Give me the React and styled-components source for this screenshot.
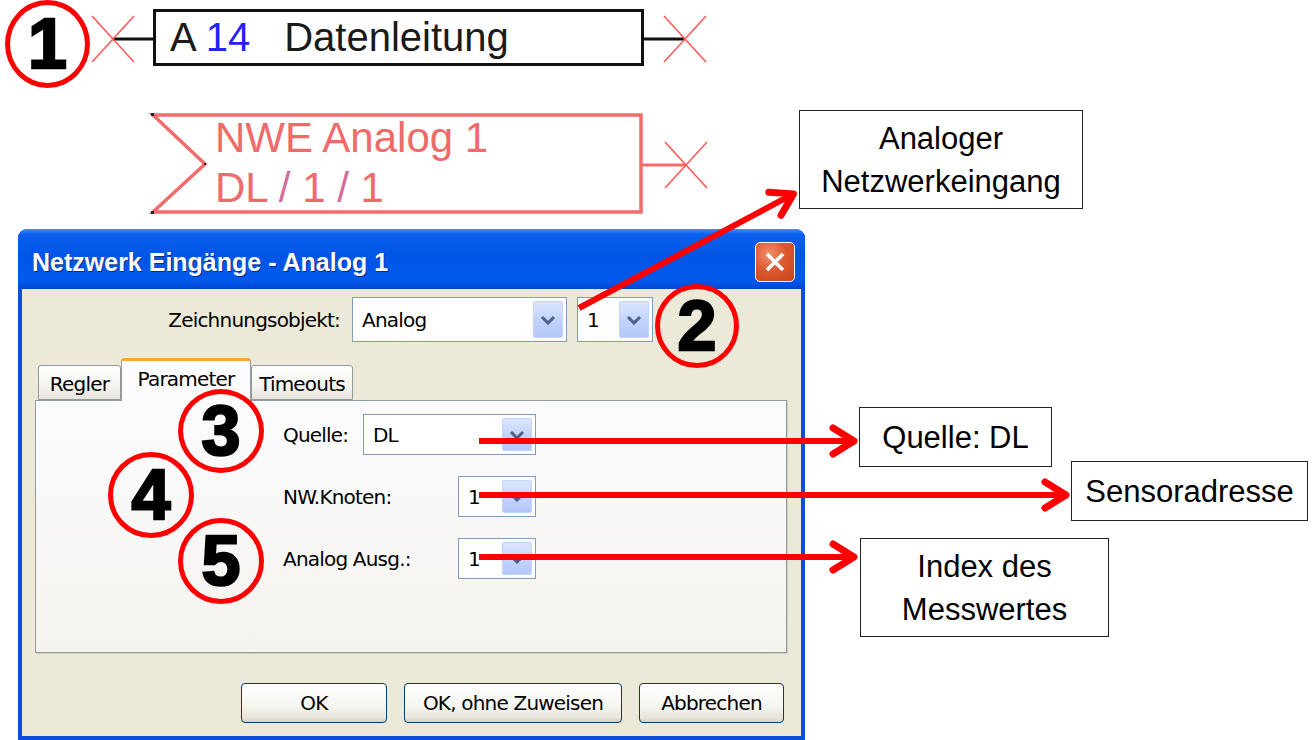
import React from 'react';
import styled, { createGlobalStyle } from 'styled-components';

const GlobalStyle = createGlobalStyle`
    html, body {
        margin: 0;
        padding: 0;
        background: #fff;
    }
    body {
        font-family: "Liberation Sans", Arial, sans-serif;
    }
`;

const Canvas = styled.div`
    position: relative;
    width: 1314px;
    height: 740px;
    overflow: hidden;
    background: #fff;
`;

const Overlay = styled.svg`
    position: absolute;
    left: 0;
    top: 0;
    width: 1314px;
    height: 740px;
    pointer-events: none;
    z-index: 3;
`;

/* line symbol "A 14 Datenleitung" */
const LineBox = styled.div`
    position: absolute;
    left: 153px;
    top: 9px;
    width: 491px;
    height: 57px;
    box-sizing: border-box;
    border: 3px solid #111;
    display: flex;
    align-items: center;
    padding-left: 14px;
    font-size: 40px;
    color: #1a1a1a;
    white-space: nowrap;
`;

const LineNumber = styled.span`
    color: #2323f0;
    margin-left: 9px;
`;

const LineName = styled.span`
    margin-left: 34px;
`;

/* network input symbol */
const InputText = styled.div`
    position: absolute;
    left: 215px;
    top: 113px;
    font-size: 42px;
    line-height: 50px;
    color: #f06a6a;
    white-space: nowrap;
`;

const Slash = styled.span`
    color: #d56c9e;
`;

const Callout = styled.div`
    position: absolute;
    left: ${p => p.$x}px;
    top: ${p => p.$y}px;
    width: ${p => p.$w}px;
    height: ${p => p.$h}px;
    box-sizing: border-box;
    border: 1.5px solid #222;
    background: #fff;
    display: flex;
    align-items: center;
    justify-content: center;
    text-align: center;
    font-size: 31px;
    line-height: 43px;
    color: #000;
`;

const Badge = styled.div`
    position: absolute;
    left: ${p => p.$x}px;
    top: ${p => p.$y}px;
    width: ${p => p.$w}px;
    height: ${p => p.$h}px;
    box-sizing: border-box;
    border: 5px solid #f00;
    border-radius: 50%;
    display: flex;
    align-items: center;
    justify-content: center;
    font-family: "Liberation Sans", Arial, sans-serif;
    font-weight: 700;
    font-size: 70px;
    line-height: 1;
    color: #000;
    -webkit-text-stroke: 2.5px #000;
    z-index: 4;
`;

/* XP dialog */
const Dialog = styled.div`
    position: absolute;
    left: 18px;
    top: 229px;
    width: 787px;
    height: 511px;
    box-sizing: border-box;
    display: flex;
    flex-direction: column;
    padding: 0 4px 4px;
    background: #0b4fd9;
    border-radius: 9px 9px 0 0;
    font-family: "DejaVu Sans", Verdana, sans-serif;
    font-size: 20px;
    letter-spacing: -0.8px;
    color: #000;
    z-index: 1;
`;

const TitleBar = styled.div`
    height: 60px;
    margin: 0 -4px;
    box-sizing: border-box;
    padding: 6px 10px 0 14px;
    display: flex;
    align-items: center;
    justify-content: space-between;
    border-radius: 9px 9px 0 0;
    background: linear-gradient(
        to bottom,
        #3d8fff 0%,
        #0b5fec 9%,
        #0055e5 45%,
        #0059ec 85%,
        #0046d4 100%
    );
`;

const Title = styled.span`
    font-family: "Liberation Sans", Arial, sans-serif;
    font-weight: 700;
    font-size: 25px;
    letter-spacing: 0;
    color: #fff;
    text-shadow: 1px 1px 0 #0a2a8c;
`;

const CloseButton = styled.div`
    width: 40px;
    height: 40px;
    box-sizing: border-box;
    border: 1.5px solid #fff;
    border-radius: 5px;
    background: radial-gradient(circle at 35% 30%, #f0906c 0%, #dd5a30 45%, #c4401a 100%);
    display: flex;
    align-items: center;
    justify-content: center;
`;

const Body = styled.div`
    flex: 1;
    display: flex;
    flex-direction: column;
    padding: 8px 14px 0 13px;
    background: #ece9d8;
`;

const TopRow = styled.div`
    display: flex;
    align-items: center;
    height: 45px;
`;

const TopLabel = styled.span`
    width: 305px;
    text-align: right;
    margin-right: 12px;
`;

const Combo = styled.div`
    width: ${p => p.$w}px;
    height: ${p => p.$h}px;
    margin-right: ${p => p.$gap || 0}px;
    box-sizing: border-box;
    display: flex;
    align-items: stretch;
    padding: 3px;
    border: 1px solid #7f9db9;
    background: #fff;
`;

const ComboValue = styled.span`
    flex: 1;
    display: flex;
    align-items: center;
    padding-left: 6px;
`;

const DropButton = styled.span`
    width: 30px;
    box-sizing: border-box;
    display: flex;
    align-items: center;
    justify-content: center;
    border: 1px solid #c3d3fd;
    border-radius: 2px;
    background: linear-gradient(to bottom, #dbe6fe 0%, #c3d4fc 50%, #b3c7f8 100%);
`;

const TabStrip = styled.div`
    display: flex;
    align-items: flex-end;
    height: 42px;
    margin-top: 16px;
    padding-left: 3px;
    position: relative;
    z-index: 1;
`;

const Tab = styled.div`
    width: ${p => p.$w}px;
    height: ${p => (p.$active ? 43 : 35)}px;
    margin-bottom: ${p => (p.$active ? -1 : 0)}px;
    box-sizing: border-box;
    display: flex;
    justify-content: center;
    align-items: ${p => (p.$active ? 'flex-start' : 'center')};
    padding-top: ${p => (p.$active ? 6 : 2)}px;
    border: 1px solid #919b9c;
    border-bottom: ${p => (p.$active ? 'none' : '1px solid #919b9c')};
    border-top: ${p => (p.$active ? '3px solid #f5a73a' : '1px solid #919b9c')};
    border-radius: 3px 3px 0 0;
    background: ${p =>
        p.$active ? '#fcfcfe' : 'linear-gradient(to bottom, #fff 0%, #f5f4f0 60%, #e6e4dc 100%)'};
`;

const Panel = styled.div`
    width: 752px;
    height: 253px;
    box-sizing: border-box;
    display: flex;
    flex-direction: column;
    gap: 21px;
    padding: 13px 0 0 247px;
    border: 1px solid #919b9c;
    background: linear-gradient(to bottom, #fcfcfe 0%, #f4f3ee 100%);
    box-shadow: 1px 1px 0 #d0cdc0;
`;

const Field = styled.div`
    display: flex;
    align-items: center;
    height: 41px;
`;

const FieldLabel = styled.span`
    width: ${p => p.$w}px;
`;

const ButtonRow = styled.div`
    display: flex;
    justify-content: flex-end;
    gap: 17px;
    margin-top: 30px;
    padding-right: 3px;
`;

const Button = styled.div`
    width: ${p => p.$w}px;
    height: 40px;
    box-sizing: border-box;
    display: flex;
    align-items: center;
    justify-content: center;
    border: 1px solid #003c74;
    border-radius: 4px;
    background: linear-gradient(to bottom, #fff 0%, #f6f6f2 55%, #e8e6dc 88%, #d6d0c5 100%);
`;

const Chevron = () => (
    <svg width="16" height="10" viewBox="0 0 16 10">
        <path d="M2 2 L8 8 L14 2" fill="none" stroke="#4d6185" strokeWidth="3" strokeLinejoin="miter" />
    </svg>
);

const Select = ({ w, h, gap, value }) => (
    <Combo $w={w} $h={h} $gap={gap}>
        <ComboValue>{value}</ComboValue>
        <DropButton>
            <Chevron />
        </DropButton>
    </Combo>
);

const Cross = ({ x, y }) => (
    <g stroke="#ff5a5a" strokeWidth="1.6">
        <line x1={x - 21} y1={y - 23} x2={x + 21} y2={y + 23} />
        <line x1={x - 21} y1={y + 23} x2={x + 21} y2={y - 23} />
    </g>
);

const Arrow = ({ x1, y1, x2, y2 }) => {
    const a = Math.atan2(y2 - y1, x2 - x1);
    const c = Math.cos(a);
    const s = Math.sin(a);
    const pt = (bx, by) => `${x2 + bx * c - by * s},${y2 + bx * s + by * c}`;
    return (
        <g stroke="#ff0000" fill="none">
            <line x1={x1} y1={y1} x2={x2 - 5 * c} y2={y2 - 5 * s} strokeWidth="6" />
            <polyline
                points={`${pt(-25, -13)} ${pt(-4, 0)} ${pt(-25, 13)}`}
                strokeWidth="7"
                strokeLinejoin="round"
                strokeLinecap="round"
            />
        </g>
    );
};

export default () => (
    <Canvas>
        <GlobalStyle />

        <LineBox>
            A<LineNumber>14</LineNumber>
            <LineName>Datenleitung</LineName>
        </LineBox>

        <InputText>
            NWE Analog 1
            <br />
            DL <Slash>/</Slash> 1 <Slash>/</Slash> 1
        </InputText>

        <Dialog>
            <TitleBar>
                <Title>Netzwerk Eingänge - Analog 1</Title>
                <CloseButton>
                    <svg width="22" height="22" viewBox="0 0 22 22">
                        <path d="M3 3 L19 19 M19 3 L3 19" stroke="#fff" strokeWidth="3.6" />
                    </svg>
                </CloseButton>
            </TitleBar>
            <Body>
                <TopRow>
                    <TopLabel>Zeichnungsobjekt:</TopLabel>
                    <Select w={215} h={45} gap={10} value="Analog" />
                    <Select w={76} h={45} value="1" />
                </TopRow>
                <TabStrip>
                    <Tab $w={83}>Regler</Tab>
                    <Tab $w={130} $active>Parameter</Tab>
                    <Tab $w={102}>Timeouts</Tab>
                </TabStrip>
                <Panel>
                    <Field>
                        <FieldLabel $w={80}>Quelle:</FieldLabel>
                        <Select w={173} h={41} value="DL" />
                    </Field>
                    <Field>
                        <FieldLabel $w={175}>NW.Knoten:</FieldLabel>
                        <Select w={78} h={41} value="1" />
                    </Field>
                    <Field>
                        <FieldLabel $w={175}>Analog Ausg.:</FieldLabel>
                        <Select w={78} h={41} value="1" />
                    </Field>
                </Panel>
                <ButtonRow>
                    <Button $w={146}>OK</Button>
                    <Button $w={218}>OK, ohne Zuweisen</Button>
                    <Button $w={145}>Abbrechen</Button>
                </ButtonRow>
            </Body>
        </Dialog>

        <Callout $x={799} $y={110} $w={284} $h={99}>
            Analoger
            <br />
            Netzwerkeingang
        </Callout>
        <Callout $x={859} $y={407} $w={193} $h={60}>
            Quelle: DL
        </Callout>
        <Callout $x={1071} $y={461} $w={237} $h={60}>
            Sensoradresse
        </Callout>
        <Callout $x={860} $y={538} $w={249} $h={99}>
            Index des
            <br />
            Messwertes
        </Callout>

        <Overlay viewBox="0 0 1314 740">
            <line x1="113" y1="39" x2="155" y2="39" stroke="#111" strokeWidth="3" />
            <line x1="642" y1="39" x2="685" y2="39" stroke="#111" strokeWidth="3" />
            <Cross x={113} y={39} />
            <Cross x={685} y={39} />

            <polygon
                points="153,115 641,115 641,212 153,212 205,164"
                fill="none"
                stroke="#f36b6b"
                strokeWidth="3.5"
            />
            <line x1="641" y1="165" x2="686" y2="165" stroke="#f36b6b" strokeWidth="3" />
            <Cross x={686} y={165} />
            <rect x="151" y="113" width="3" height="3" fill="#222" />
            <rect x="151" y="211" width="3" height="3" fill="#222" />
            <rect x="204" y="163" width="2" height="2" fill="#222" />

            <Arrow x1={579} y1={308} x2={797} y2={192} />
            <Arrow x1={479} y1={441} x2={858} y2={441} />
            <Arrow x1={479} y1={495} x2={1070} y2={495} />
            <Arrow x1={479} y1={557} x2={858} y2={557} />
        </Overlay>

        <Badge $x={5} $y={0} $w={85} $h={88}>1</Badge>
        <Badge $x={655} $y={284} $w={84} $h={84}>2</Badge>
        <Badge $x={178} $y={389} $w={86} $h={84}>3</Badge>
        <Badge $x={108} $y={452} $w={86} $h={86}>4</Badge>
        <Badge $x={178} $y={518} $w={86} $h={86}>5</Badge>
    </Canvas>
);
